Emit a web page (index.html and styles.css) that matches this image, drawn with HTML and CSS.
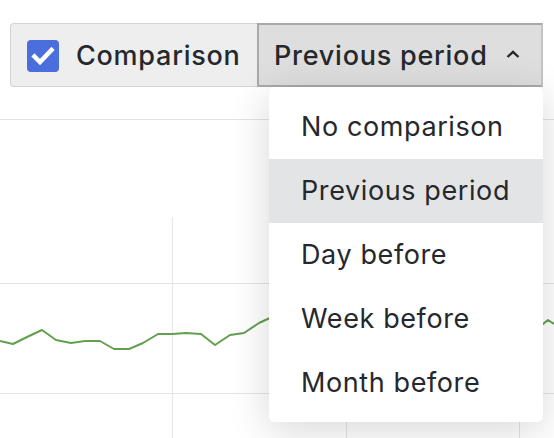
FILE: index.html
```html
<!DOCTYPE html>
<html lang="en">
<head>
<meta charset="utf-8">
<link rel="stylesheet" href="styles.css">
</head>
<body>
<div class="page">
  <div class="toolbar">
    <div class="btn-group">
      <button class="btn btn-compare">
        <span class="checkbox">
          <svg width="32" height="32" viewBox="0 0 32 32"><path d="M7.5 16.5 L13 22 L24.5 10" fill="none" stroke="#fff" stroke-width="4.5" stroke-linecap="square" stroke-linejoin="miter"/></svg>
        </span>
        <span class="btn-label">Comparison</span>
      </button>
      <button class="btn btn-period">
        <span class="btn-label">Previous period</span>
        <svg class="chevron" width="14" height="8" viewBox="0 0 14 8"><path d="M1.5 7 L7 1.8 L12.5 7" fill="none" stroke="#25282c" stroke-width="2.4"/></svg>
      </button>
    </div>
  </div>
  <div class="divider"></div>
  <svg class="chart" width="554" height="318" viewBox="0 120 554 318">
    <g stroke="#e4e4e4" stroke-width="1">
      <line x1="0" y1="283.5" x2="554" y2="283.5"/>
      <line x1="0" y1="393.5" x2="554" y2="393.5"/>
      <line x1="172.5" y1="217" x2="172.5" y2="438"/>
      <line x1="346.5" y1="217" x2="346.5" y2="438"/>
      <line x1="519.5" y1="217" x2="519.5" y2="438"/>
    </g>
    <polyline fill="none" stroke="#62a04f" stroke-width="2" stroke-linejoin="round"
      points="0,341 13,344 27,337 42,330 56,340 71,343 85,341 100,341 114,349 129,349 143,343 158,334 172,334 186,333 201,334 215,345 230,335 244,333 259,323 272,317 300,310 330,318 360,322 400,315 440,325 480,320 520,326 543,324 548,320 554,324"/>
  </svg>
  <ul class="menu">
    <li class="menu-item">No comparison</li>
    <li class="menu-item active">Previous period</li>
    <li class="menu-item">Day before</li>
    <li class="menu-item">Week before</li>
    <li class="menu-item">Month before</li>
  </ul>
</div>
</body>
</html>
```

FILE: styles.css
```css
html, body {
  margin: 0;
  padding: 0;
  background: #ffffff;
}

body {
  font-family: Inter, "Noto Sans", "Liberation Sans", sans-serif;
  color: #25282c;
  overflow: hidden;
}

.page {
  position: relative;
  width: 554px;
  height: 438px;
  overflow: hidden;
}

.toolbar {
  display: flex;
  padding: 23px 0 0 10px;
}

.btn-group {
  display: flex;
}

.btn {
  display: flex;
  align-items: center;
  height: 64px;
  box-sizing: border-box;
  font-family: inherit;
  font-size: 27px;
  font-weight: 500;
  letter-spacing: 0.75px;
  color: #25282c;
  margin: 0;
  cursor: pointer;
}

.btn-compare {
  width: 247px;
  padding: 0 0 0 16px;
  background: #eeeeee;
  border: 1px solid #d3d3d3;
  border-right: none;
  border-radius: 4px 0 0 4px;
}

.checkbox {
  display: block;
  width: 32px;
  height: 32px;
  background: #4a6fdc;
  border-radius: 4px;
  margin-right: 17px;
  margin-top: 2px;
}

.checkbox svg {
  display: block;
}

.btn-period {
  width: 286px;
  padding: 0 0 0 15px;
  background: #dedede;
  border: 2px solid #a9a9a9;
  border-right-color: #c4c4c4;
}

.chevron {
  display: block;
  margin-left: 18px;
  margin-bottom: 3px;
}

.divider {
  height: 1px;
  background: #e2e2e2;
  margin-top: 32px;
}

.chart {
  display: block;
}

.menu {
  position: absolute;
  left: 269px;
  top: 87px;
  width: 274px;
  height: 335px;
  box-sizing: border-box;
  margin: 0;
  padding: 8px 0;
  list-style: none;
  background: #ffffff;
  border-radius: 6px;
  box-shadow: 0 8px 40px rgba(0, 0, 0, 0.16);
}

.menu-item {
  height: 64px;
  line-height: 64px;
  padding-left: 32px;
  font-size: 27px;
  font-weight: 400;
  letter-spacing: 0.6px;
  color: #25282c;
}

.menu-item.active {
  background: #e3e4e6;
}
```
